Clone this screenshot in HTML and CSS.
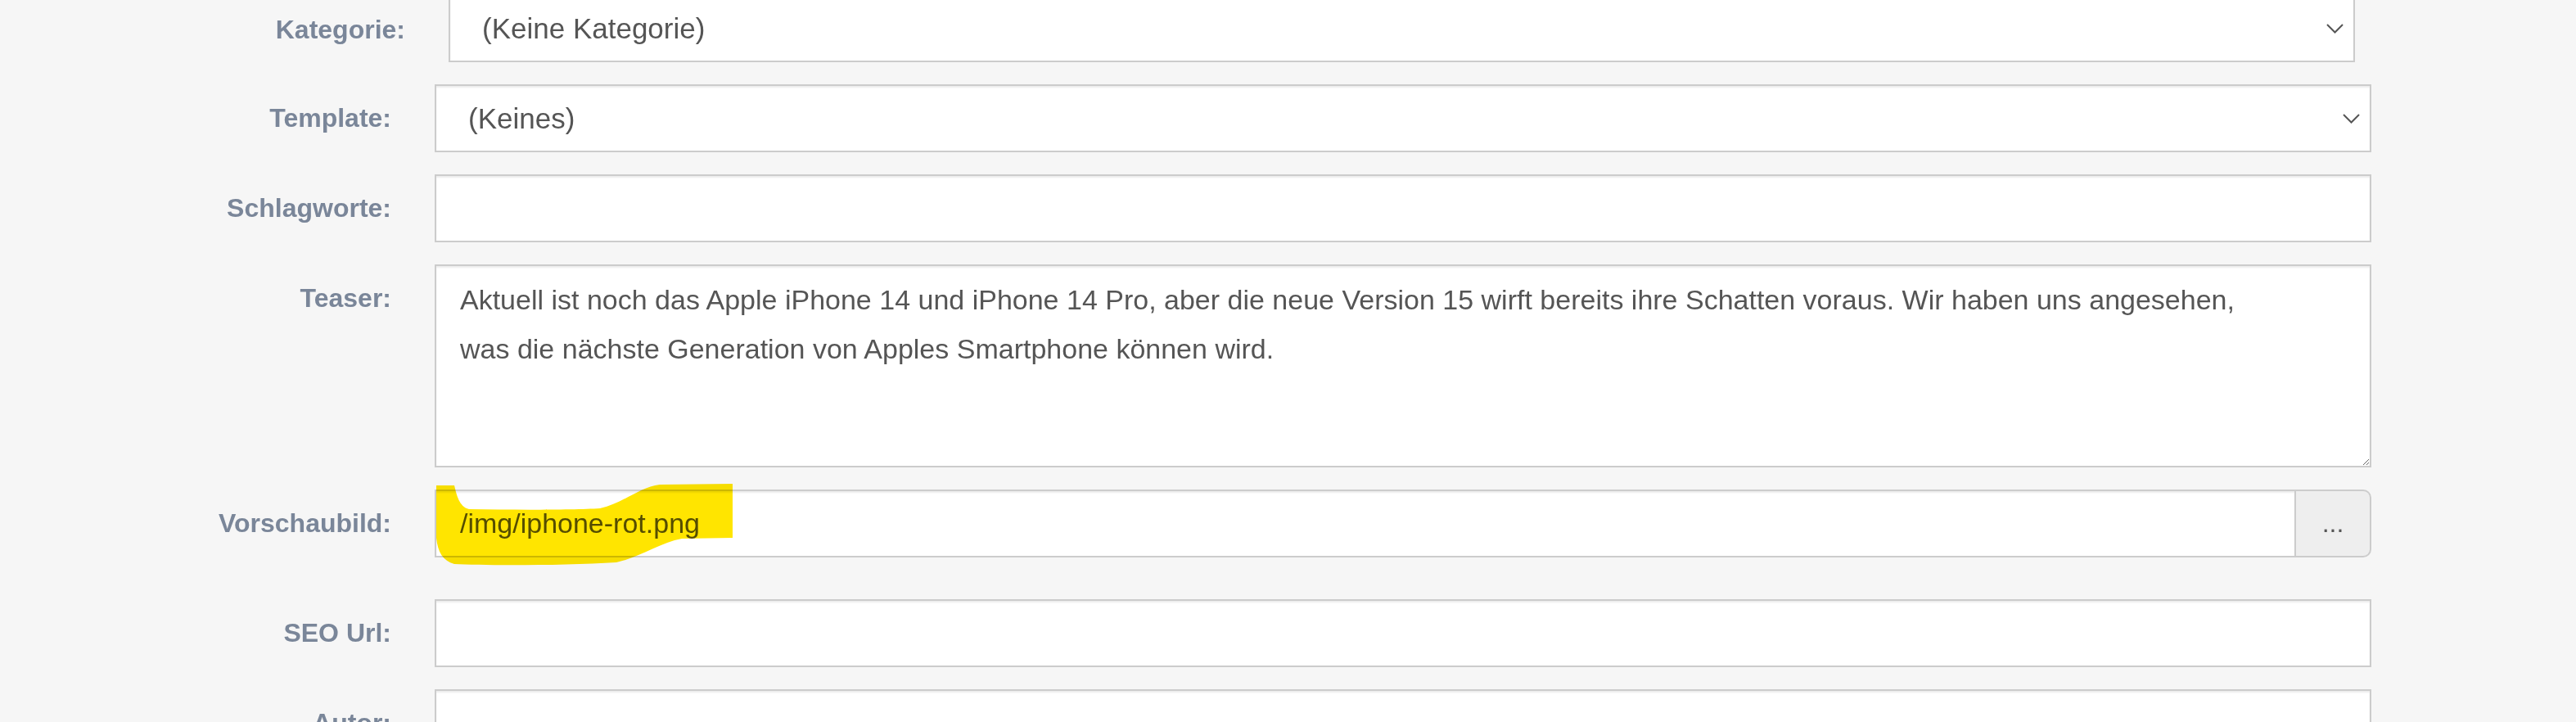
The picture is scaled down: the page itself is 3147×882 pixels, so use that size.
FILE: index.html
```html
<!DOCTYPE html>
<html lang="de">
<head>
  <meta charset="UTF-8">
  <title>Artikel bearbeiten</title>
  <link rel="stylesheet" href="styles.css">
</head>
<body>
  <form class="form">
    <div class="row row-shifted">
      <label class="label">Kategorie:</label>
      <div class="select-wrap">
        <select class="control select"><option>(Keine Kategorie)</option></select>
        <svg class="chevron" viewBox="0 0 21 12" width="21" height="12"><polyline points="1,1 10.5,10.5 20,1" fill="none" stroke="#555" stroke-width="2"/></svg>
      </div>
    </div>
    <div class="row">
      <label class="label">Template:</label>
      <div class="select-wrap">
        <select class="control select"><option>(Keines)</option></select>
        <svg class="chevron" viewBox="0 0 21 12" width="21" height="12"><polyline points="1,1 10.5,10.5 20,1" fill="none" stroke="#555" stroke-width="2"/></svg>
      </div>
    </div>
    <div class="row">
      <label class="label">Schlagworte:</label>
      <input class="control" type="text" value="">
    </div>
    <div class="row">
      <label class="label">Teaser:</label>
      <textarea class="control textarea">Aktuell ist noch das Apple iPhone 14 und iPhone 14 Pro, aber die neue Version 15 wirft bereits ihre Schatten voraus. Wir haben uns angesehen,
was die nächste Generation von Apples Smartphone können wird.</textarea>
    </div>
    <div class="row row-spaced">
      <label class="label">Vorschaubild:</label>
      <div class="input-group">
        <input class="control" type="text" value="/img/iphone-rot.png">
        <span class="addon">...</span>
        <svg class="marker" viewBox="0 0 370 110" width="370" height="110"><path d="M2 8 L24 8 C27 20 30 34 42 37 C100 38 170 38 202 36 C230 30 250 10 275 7 L364 6 L364 72 L302 73 C275 78 250 96 222 102 C160 106 60 106 24 104 C10 100 4 90 2 72 Z" fill="#ffe500"/></svg>
      </div>
    </div>
    <div class="row">
      <label class="label">SEO Url:</label>
      <input class="control" type="text" value="">
    </div>
    <div class="row">
      <label class="label">Autor:</label>
      <input class="control" type="text" value="">
    </div>
  </form>
</body>
</html>
```

FILE: styles.css
```css
html, body {
  margin: 0;
  overflow: hidden;
}
body {
  background: #f6f6f6;
  font-family: "Liberation Sans", Arial, sans-serif;
}
.form {
  width: 2897px;
  margin-top: -7px;
  display: flex;
  flex-direction: column;
  gap: 27px;
}
.row {
  display: grid;
  grid-template-columns: 478px 1fr;
  column-gap: 53px;
  align-items: start;
}
.row-shifted {
  padding-left: 17px;
  padding-right: 20px;
}
.row-shifted .label {
  padding-top: 21px;
}
.row-spaced {
  margin-bottom: 24px;
}
.label {
  text-align: right;
  font-size: 32px;
  font-weight: bold;
  line-height: 45px;
  padding-top: 19px;
  color: #7a8699;
}
.control {
  box-sizing: border-box;
  width: 100%;
  height: 83px;
  margin: 0;
  padding: 0 29px;
  border: 2px solid #ccc;
  border-radius: 0;
  background: #fff;
  color: #555;
  font-family: "Liberation Sans", Arial, sans-serif;
  font-size: 34px;
  box-shadow: inset 0 2px 2px rgba(0, 0, 0, 0.075);
  outline: none;
}
.select-wrap {
  position: relative;
}
.select {
  appearance: none;
  -webkit-appearance: none;
  padding-left: 39px;
  font-size: 35px;
}
.chevron {
  position: absolute;
  right: 14px;
  top: 50%;
  margin-top: -6px;
  pointer-events: none;
}
.textarea {
  display: block;
  height: 248px;
  padding: 11px 29px;
  line-height: 60px;
  resize: vertical;
}
.input-group {
  position: relative;
  display: flex;
}
.input-group .control {
  flex: 1;
}
.addon {
  box-sizing: border-box;
  width: 92px;
  height: 83px;
  flex: none;
  border: 2px solid #ccc;
  border-left: 0;
  border-radius: 0 10px 10px 0;
  background: #eee;
  color: #555;
  font-size: 32px;
  display: flex;
  align-items: center;
  justify-content: center;
}
.marker {
  position: absolute;
  left: 0;
  top: -13px;
  mix-blend-mode: multiply;
  pointer-events: none;
}
```
